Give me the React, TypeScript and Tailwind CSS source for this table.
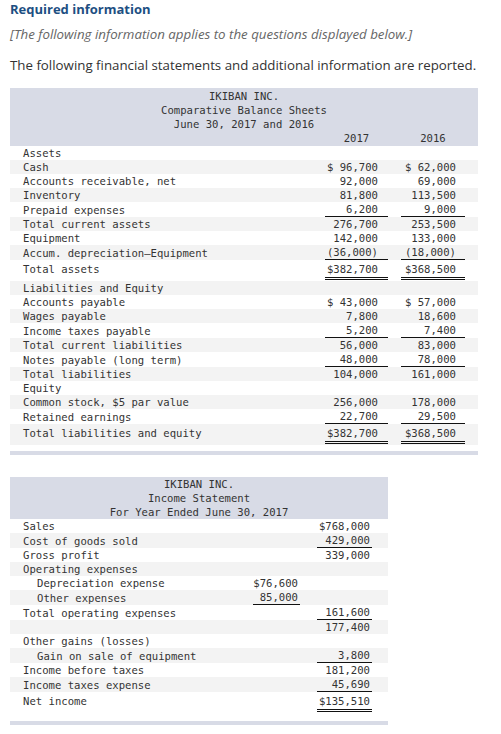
import cn from "clsx";

type Line = "none" | "single" | "double";

type BsRow = {
  label: string;
  a?: string;
  b?: string;
  line?: Line;
};

const balanceRows: BsRow[] = [
  { label: "Assets" },
  { label: "Cash", a: "$ 96,700", b: "$ 62,000" },
  { label: "Accounts receivable, net", a: "92,000", b: "69,000" },
  { label: "Inventory", a: "81,800", b: "113,500" },
  { label: "Prepaid expenses", a: "6,200", b: "9,000", line: "single" },
  { label: "Total current assets", a: "276,700", b: "253,500" },
  { label: "Equipment", a: "142,000", b: "133,000" },
  { label: "Accum. depreciation\u2013Equipment", a: "(36,000)", b: "(18,000)", line: "single" },
  { label: "Total assets", a: "$382,700", b: "$368,500", line: "double" },
  { label: "Liabilities and Equity" },
  { label: "Accounts payable", a: "$ 43,000", b: "$ 57,000" },
  { label: "Wages payable", a: "7,800", b: "18,600" },
  { label: "Income taxes payable", a: "5,200", b: "7,400", line: "single" },
  { label: "Total current liabilities", a: "56,000", b: "83,000" },
  { label: "Notes payable (long term)", a: "48,000", b: "78,000", line: "single" },
  { label: "Total liabilities", a: "104,000", b: "161,000" },
  { label: "Equity" },
  { label: "Common stock, $5 par value", a: "256,000", b: "178,000" },
  { label: "Retained earnings", a: "22,700", b: "29,500", line: "single" },
  { label: "Total liabilities and equity", a: "$382,700", b: "$368,500", line: "double" },
];

type IsRow = {
  label: string;
  mid?: string;
  right?: string;
  midLine?: Line;
  rightLine?: Line;
  indent?: boolean;
};

const incomeRows: IsRow[] = [
  { label: "Sales", right: "$768,000" },
  { label: "Cost of goods sold", right: "429,000", rightLine: "single" },
  { label: "Gross profit", right: "339,000" },
  { label: "Operating expenses" },
  { label: "Depreciation expense", mid: "$76,600", indent: true },
  { label: "Other expenses", mid: "85,000", midLine: "single", indent: true },
  { label: "Total operating expenses", right: "161,600", rightLine: "single" },
  { label: "", right: "177,400" },
  { label: "Other gains (losses)" },
  { label: "Gain on sale of equipment", right: "3,800", rightLine: "single", indent: true },
  { label: "Income before taxes", right: "181,200" },
  { label: "Income taxes expense", right: "45,690", rightLine: "single" },
  { label: "Net income", right: "$135,510", rightLine: "double" },
];

const mono = "font-['DejaVu_Sans_Mono',monospace] text-[10.6px] leading-[14px] text-[#333]";

function lineCls(line?: Line) {
  if (line === "single") return "border-b border-[#111]";
  if (line === "double") return "pb-[1px] border-b-[3px] border-double border-[#111]";
  return "";
}

export default function App() {
  return (
    <div className="w-[501px] bg-white pl-[10px] pt-[1px] font-['Open_Sans',sans-serif]">
      <h2 className="text-[13px] font-bold leading-[17px] text-[#1d4f82]">Required information</h2>
      <p className="mt-[7px] text-[13.3px] italic leading-[18px] text-[#666]">
        [The following information applies to the questions displayed below.]
      </p>
      <p className="mt-[13px] text-[13.3px] leading-[18px] text-[#333]">
        The following financial statements and additional information are reported.
      </p>

      {/* Balance sheet */}
      <div className={cn("mt-[14px] w-[468px]", mono)}>
        <div className="bg-[#d8dbe6] pt-[1px] pb-[1px]">
          <div className="text-center">IKIBAN INC.</div>
          <div className="text-center">Comparative Balance Sheets</div>
          <div className="text-center">June 30, 2017 and 2016</div>
          <div className="flex justify-end gap-[13px] pr-[13px]">
            <div className="w-[63px] text-center">2017</div>
            <div className="w-[64px] text-center">2016</div>
          </div>
        </div>
        {balanceRows.map((row, idx) => (
          <div
            key={idx}
            className={cn(
              "flex items-end pl-[13px] pr-[13px]",
              idx % 2 === 1 ? "bg-[#f3f3f3]" : "bg-white",
              row.line === "double" && "pt-[2px] pb-[1px]"
            )}
          >
            <div className={cn("min-h-[14px] flex-1 whitespace-pre", row.line === "double" && "mb-[4px]")}>
              {row.label}
            </div>
            <div className={cn("w-[63px] whitespace-pre pr-[10px] text-right", lineCls(row.line))}>
              {row.a}
            </div>
            <div className="w-[13px]" />
            <div className={cn("w-[64px] whitespace-pre pr-[9px] text-right", lineCls(row.line))}>
              {row.b}
            </div>
          </div>
        ))}
        <div className="mt-[6px] h-[4px] bg-[#d8dbe6]" />
      </div>

      {/* Income statement */}
      <div className={cn("mt-[22px] w-[378px]", mono)}>
        <div className="bg-[#d8dbe6]">
          <div className="text-center">IKIBAN INC.</div>
          <div className="text-center">Income Statement</div>
          <div className="text-center">For Year Ended June 30, 2017</div>
        </div>
        {incomeRows.map((row, idx) => (
          <div
            key={idx}
            className={cn(
              "flex items-end pl-[13px] pr-[16px]",
              idx % 2 === 1 ? "bg-[#f3f3f3]" : "bg-white",
              row.rightLine === "double" && "pt-[2px] pb-[1px]"
            )}
          >
            <div
              className={cn(
                "min-h-[14px] flex-1 whitespace-pre",
                row.indent && "pl-[14px]",
                row.rightLine === "double" && "mb-[4px]"
              )}
            >
              {row.label}
            </div>
            <div className={cn("w-[47px] pr-[2px] text-right", lineCls(row.midLine))}>{row.mid}</div>
            <div className="w-[17px]" />
            <div className={cn("w-[55px] pr-[2px] text-right", lineCls(row.rightLine))}>{row.right}</div>
          </div>
        ))}
        <div className="mt-[8px] h-[4px] bg-[#d8dbe6]" />
      </div>
    </div>
  );
}
